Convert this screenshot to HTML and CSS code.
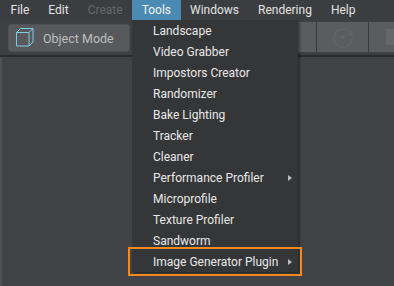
FILE: index.html
```html
<!doctype html>
<html>
  <head>
    <meta charset="UTF-8" />
    <title>Editor</title>
    <link rel="stylesheet" href="styles.css">
  </head>
  <body>
    <div class="menubar">
      <span class="menu-item">File</span>
      <span class="menu-item">Edit</span>
      <span class="menu-item disabled">Create</span>
      <span class="menu-item active">Tools</span>
      <span class="menu-item">Windows</span>
      <span class="menu-item">Rendering</span>
      <span class="menu-item">Help</span>
    </div>

    <div class="toolbar">
      <button class="mode-btn" type="button">
        <svg width="18" height="19" viewBox="0 0 18 19" fill="none" stroke="#7fcbe2" stroke-width="1">
          <path d="M0.5 4.5h12.5v13.5h-12.5z" />
          <path d="M0.5 4.5l4 -4h12.5l-4 4" />
          <path d="M17 0.5v13.5l-4 4" />
        </svg>
        <span>Object Mode</span>
      </button>
      <div class="tool-group">
        <div class="tool-btn wide"></div>
        <div class="tool-btn">
          <svg width="24" height="24" viewBox="0 0 24 24" fill="none" stroke="#646568" stroke-width="1.3">
            <path d="M20 9a9 9 0 1 0 1 5" />
            <path d="M21 4.5v5h-5" />
            <circle cx="12" cy="12" r="2" fill="#646568" stroke="none" />
          </svg>
        </div>
        <div class="tool-btn last">
          <span class="tool-square"></span>
        </div>
      </div>
    </div>

    <div class="viewport"></div>

    <div class="dropdown">
      <div class="drop-item">Landscape</div>
      <div class="drop-item">Video Grabber</div>
      <div class="drop-item">Impostors Creator</div>
      <div class="drop-item">Randomizer</div>
      <div class="drop-item">Bake Lighting</div>
      <div class="drop-item">Tracker</div>
      <div class="drop-item">Cleaner</div>
      <div class="drop-item">Performance Profiler <span class="arrow"></span></div>
      <div class="drop-item">Microprofile</div>
      <div class="drop-item">Texture Profiler</div>
      <div class="drop-item">Sandworm</div>
      <div class="drop-item marked">Image Generator Plugin <span class="arrow"></span></div>
    </div>
  </body>
</html>
```

FILE: styles.css
```css
* {
  box-sizing: border-box;
}

body {
  margin: 0;
  width: 394px;
  height: 286px;
  overflow: hidden;
  display: flex;
  flex-direction: column;
  background-color: #424346;
  font-family: Roboto, "Liberation Sans", sans-serif;
  font-size: 12px;
}

.menubar {
  display: flex;
  height: 20px;
  padding-left: 1px;
  background-color: #3c3d40;
  flex-shrink: 0;
}

.menu-item {
  padding: 0 9.5px;
  line-height: 20px;
  color: #e3e3e3;
}

.menu-item.disabled {
  color: #66676a;
}

.menu-item.active {
  background-color: #4b8ab2;
  color: #f4f4f4;
}

.toolbar {
  display: flex;
  align-items: flex-start;
  height: 37px;
  padding: 4px 0 0 8px;
  background-color: #3e3f42;
  border-bottom: 2px solid #2a2b2d;
  flex-shrink: 0;
}

.mode-btn {
  display: flex;
  align-items: center;
  gap: 9px;
  width: 122px;
  height: 28px;
  padding: 0 0 0 7px;
  border: 1px solid #505155;
  border-radius: 3px;
  background-color: #58595c;
  color: #bdbdbd;
  font-family: Roboto, "Liberation Sans", sans-serif;
  font-size: 12.5px;
  flex-shrink: 0;
}

.mode-btn svg {
  margin-top: -1px;
}

.tool-group {
  display: flex;
  flex: 1;
  min-width: 0;
  gap: 1px;
  height: 30px;
  margin-top: -2px;
  margin-left: 140px;
  background-color: #3a3b3d;
  overflow: hidden;
}

.tool-btn {
  display: flex;
  align-items: center;
  justify-content: center;
  width: 51px;
  height: 30px;
  background-color: #5b5c5f;
  flex-shrink: 0;
}

.tool-btn.wide {
  width: 46px;
}

.tool-btn.last {
  flex: 1;
  justify-content: flex-start;
  padding-left: 17px;
}

.tool-square {
  width: 10px;
  height: 16px;
  background-color: #66676a;
}

.viewport {
  flex: 1;
  border-left: 2px solid #505154;
}

.dropdown {
  position: absolute;
  left: 132px;
  top: 20px;
  width: 166px;
  background-color: #353638;
  box-shadow: 2px 2px 2px rgba(0, 0, 0, 0.35);
}

.drop-item {
  display: flex;
  align-items: center;
  justify-content: space-between;
  height: 21px;
  padding: 0 6px 0 21px;
  color: #e8e8e8;
}

.arrow {
  width: 0;
  height: 0;
  border-top: 3.5px solid transparent;
  border-bottom: 3.5px solid transparent;
  border-left: 4.5px solid #bcbcbc;
}

.drop-item.marked {
  outline: 2px solid #f28a1e;
  outline-offset: 2px;
}
```
